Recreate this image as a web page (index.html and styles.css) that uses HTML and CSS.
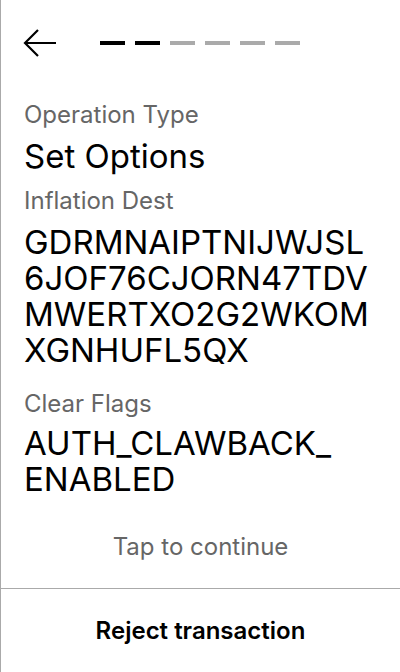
FILE: index.html
```html
<!DOCTYPE html>
<html>
<head>
<meta charset="utf-8">
<link rel="stylesheet" href="styles.css">
</head>
<body>
<div class="screen">
  <div class="header">
    <svg class="back" width="34" height="28" viewBox="0 0 34 28">
      <path d="M33 14 H2 M15 1 L2 14 L15 27" fill="none" stroke="#000" stroke-width="2.2"/>
    </svg>
    <div class="steps">
      <span class="step done"></span>
      <span class="step done"></span>
      <span class="step"></span>
      <span class="step"></span>
      <span class="step"></span>
      <span class="step"></span>
    </div>
  </div>
  <div class="content">
    <div class="field">
      <div class="label">Operation Type</div>
      <div class="value">Set Options</div>
    </div>
    <div class="field">
      <div class="label">Inflation Dest</div>
      <div class="value addr">GDRMNAIPTNIJWJSL6JOF76CJORN47TDVMWERTXO2G2WKOMXGNHUFL5QX</div>
    </div>
    <div class="field">
      <div class="label">Clear Flags</div>
      <div class="value flags">AUTH_CLAWBACK_<wbr>ENABLED</div>
    </div>
  </div>
  <div class="tap">Tap to continue</div>
  <div class="footer">Reject transaction</div>
</div>
</body>
</html>
```
FILE: styles.css
```css
html, body {
  margin: 0;
  padding: 0;
  background: #fff;
}
body {
  font-family: Inter, "Noto Sans", sans-serif;
  color: #000;
}
.screen {
  width: 400px;
  height: 672px;
  box-sizing: border-box;
  border-left: 1px solid #aaa;
  display: flex;
  flex-direction: column;
}
.header {
  display: flex;
  align-items: center;
  padding: 27px 0 0 22px;
  height: 32px;
}
.back {
  display: block;
}
.steps {
  display: flex;
  gap: 10px;
  margin-left: 43px;
}
.step {
  width: 25px;
  height: 4px;
  background: #aaa;
}
.step.done {
  background: #000;
}
.content {
  padding: 40px 23px 0 23px;
  flex: 1;
  display: flex;
  flex-direction: column;
  gap: 11px;
}
.label {
  font-size: 24px;
  line-height: 32px;
  color: #666;
}
.value {
  font-size: 33px;
  line-height: 36px;
  margin-top: 7px;
}
.addr {
  word-break: break-all;
  margin-bottom: 9px;
}
.flags {
  margin-top: 5px;
}
.tap {
  text-align: center;
  font-size: 24px;
  color: #666;
  padding-bottom: 27px;
}
.footer {
  border-top: 1px solid #aaa;
  height: 83px;
  display: flex;
  align-items: center;
  justify-content: center;
  font-size: 24px;
  font-weight: 600;
}
```
